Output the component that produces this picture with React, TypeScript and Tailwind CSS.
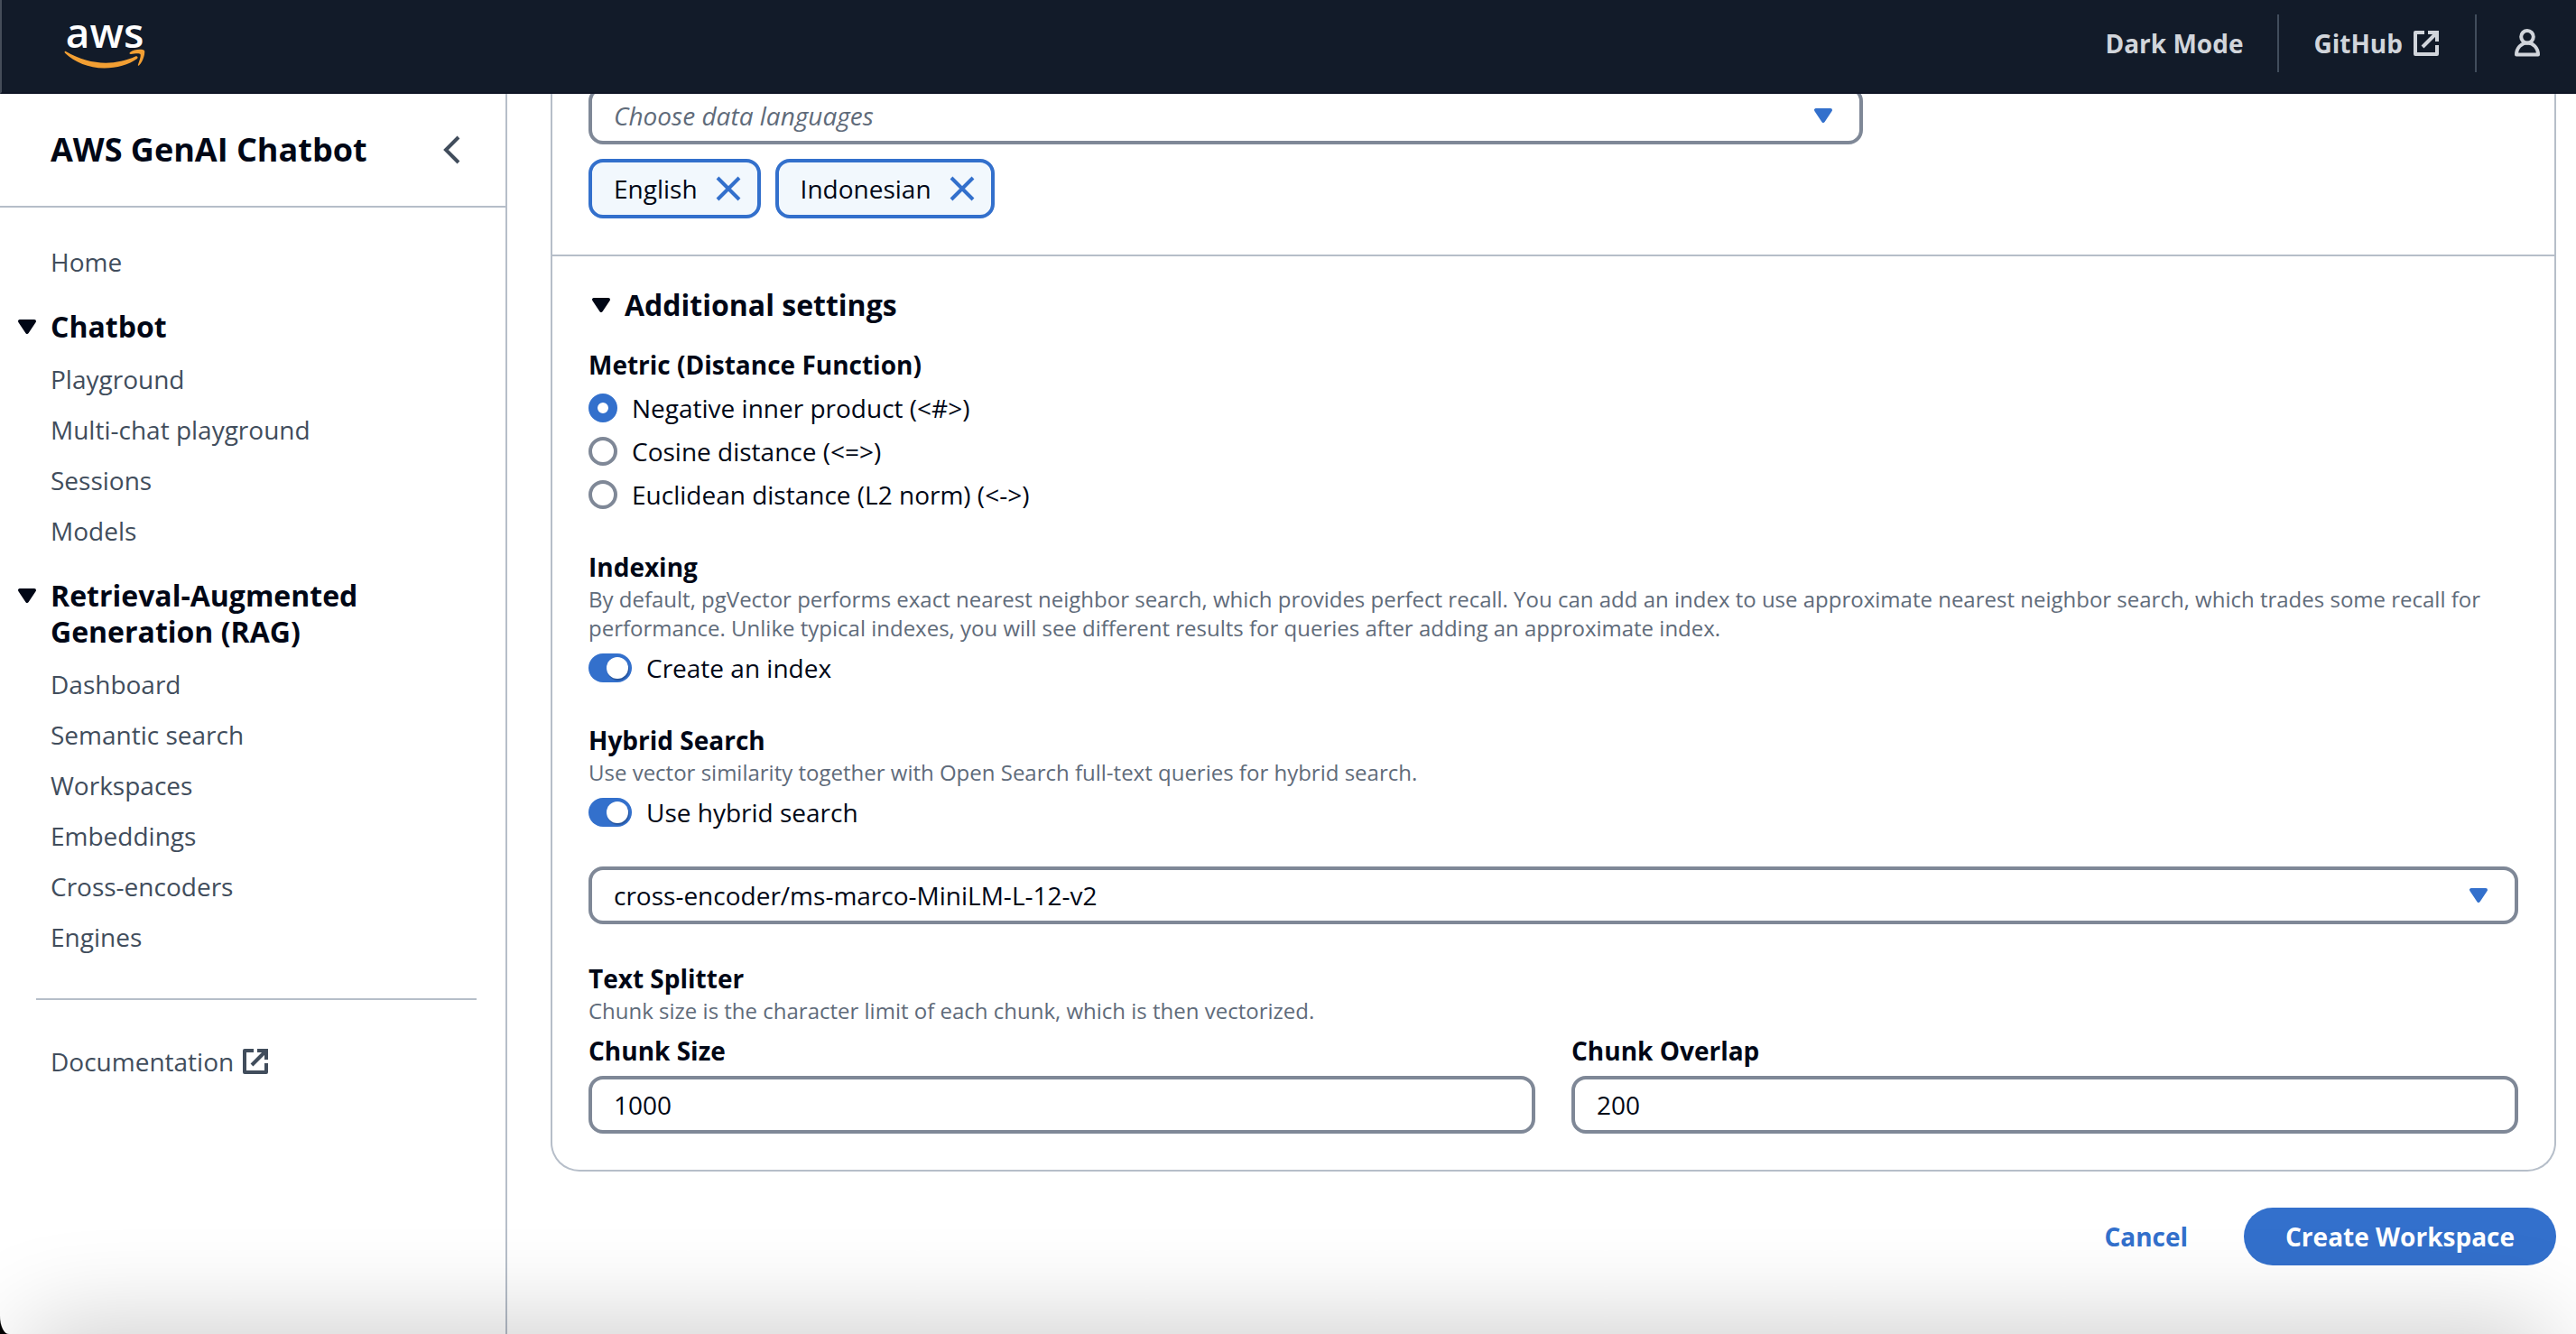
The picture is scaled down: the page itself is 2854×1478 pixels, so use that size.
import React, { useState } from "react";

function ExternalIcon({ className }: { className?: string }) {
  return (
    <svg viewBox="0 0 16 16" aria-hidden="true" className={className} fill="none" stroke="currentColor" strokeWidth="2" strokeLinejoin="round">
      <path d="M7 2H2v12h12V9" />
      <path d="M9 2h5v5" strokeLinejoin="miter" />
      <path d="M6 10l7.5-7.5" />
    </svg>
  );
}

function UserIcon() {
  return (
    <svg viewBox="0 0 16 16" aria-hidden="true" className="size-8" fill="none" stroke="currentColor" strokeWidth="2" strokeLinejoin="round">
      <circle cx="8" cy="4.400" r="3.400" />
      <path d="M8 7.800c-3.300 0-6 2.700-6 6.500h12c0-3.800-2.700-6.500-6-6.500z" />
    </svg>
  );
}

function Caret() {
  return (
    <svg viewBox="0 0 16 16" aria-hidden="true" className="size-8 shrink-0" fill="currentColor" stroke="currentColor" strokeWidth="2" strokeLinejoin="round">
      <path d="M4 5h8l-4 6-4-6z" />
    </svg>
  );
}

function AwsLogo() {
  return (
    <a href="#" aria-label="aws" className="flex h-16 w-24 flex-col items-center text-white">
      <span className="text-[46px] leading-[38px] font-semibold">aws</span>
      <svg viewBox="0 0 90 23" aria-hidden="true" className="h-[23px] w-[90px] shrink-0" fill="#f29f33">
        <path d="M2 3C28 18.500 56 19 79 8.500C81 7.500 82.500 9.500 81 11C72 17.500 58 21.500 44.500 21.500C27 21.500 12 15 1 4.800C0 3.500 1 2.500 2 3z" />
        <path d="M73 4c4-3.500 14-4 16-2 1 2-1 12-6 16.500-1 .5-1.500 0-1-1 1-3 3.500-9.500 2.500-11.500-1-1.500-7-.5-10.500 0-1.500 0-2-1-1-2z" />
      </svg>
    </a>
  );
}

function NavLink({ children }: { children: React.ReactNode }) {
  return (
    <li>
      <a href="#" className="flex items-center gap-2 text-[#414d5c]">{children}</a>
    </li>
  );
}

function NavSection({ title, items }: { title: string; items: string[] }) {
  return (
    <section>
      <button type="button" aria-expanded="true" className="-ml-[42px] flex items-start gap-2.5 pb-4.5 text-left text-[32px] leading-10 font-bold">
        <span className="flex h-10 items-center"><Caret /></span>
        <span>{title}</span>
      </button>
      <ul className="flex flex-col gap-4">
        {items.map((i) => <NavLink key={i}>{i}</NavLink>)}
      </ul>
    </section>
  );
}

function Select({ id, label, options, placeholder }: { id: string; label: string; options: string[]; placeholder?: boolean }) {
  return (
    <div className="relative flex items-center">
      <select
        id={id}
        aria-label={label}
        className={
          placeholder
            ? "h-16 w-full appearance-none rounded-2xl border-4 border-[#7f8897] bg-white px-6 text-[#5f6b7a] italic"
            : "h-16 w-full appearance-none rounded-2xl border-4 border-[#7f8897] bg-white px-6"
        }
      >
        {options.map((o) => <option key={o}>{o}</option>)}
      </select>
      <span className="pointer-events-none absolute right-7 text-[#3370cc]"><Caret /></span>
    </div>
  );
}

function Token({ label, onRemove }: { label: string; onRemove: () => void }) {
  return (
    <li className="flex h-[66px] items-center gap-4.5 rounded-2xl border-4 border-[#3370cc] bg-[#f2f8fd] pr-4 pl-6">
      {label}
      <button type="button" aria-label={`Remove ${label}`} onClick={onRemove} className="text-[#3370cc]">
        <svg viewBox="0 0 16 16" aria-hidden="true" className="size-8" fill="none" stroke="currentColor" strokeWidth="2">
          <path d="M2 2l12 12M14 2L2 14" />
        </svg>
      </button>
    </li>
  );
}

function Field({ title, hint, children }: { title: string; hint: string; children: React.ReactNode }) {
  return (
    <div>
      <h3 className="font-bold">{title}</h3>
      <p className="pb-2 text-2xl leading-8 text-[#5f6b7a]">{hint}</p>
      {children}
    </div>
  );
}

function Toggle({ label }: { label: string }) {
  return (
    <label className="flex items-center gap-4">
      <input
        type="checkbox"
        role="switch"
        defaultChecked
        className="flex h-8 w-12 appearance-none items-center rounded-full bg-[#7f8897] p-1 before:size-6 before:rounded-full before:bg-white before:shadow-[1px_2px_1px_rgba(0,7,22,0.25)] checked:justify-end checked:bg-[#3370cc]"
      />
      {label}
    </label>
  );
}

function NumberInput({ id, label, value }: { id: string; label: string; value: string }) {
  return (
    <div className="flex flex-col gap-2">
      <label htmlFor={id} className="font-bold">{label}</label>
      <input id={id} type="text" inputMode="numeric" defaultValue={value} className="h-16 w-full rounded-2xl border-4 border-[#7f8897] bg-white px-6" />
    </div>
  );
}

const metrics = ["Negative inner product (<#>)", "Cosine distance (<=>)", "Euclidean distance (L2 norm) (<->)"];

export default function App() {
  const [languages, setLanguages] = useState(["English", "Indonesian"]);

  return (
    <div className="relative flex h-screen flex-col overflow-hidden bg-white font-['Open_Sans',sans-serif] text-[28px] leading-10 text-[#000716] shadow-[0_0_0_40px_#000] [border-bottom-left-radius:10px_20px]">
      <header className="relative z-10 flex h-[104px] shrink-0 items-center justify-between border-b-2 border-l-2 border-b-[#0f1525] border-l-[#454d59] bg-[#121b29] pr-[38px] pb-1.5 pl-[66px] font-bold text-[#d1d5db]">
        <AwsLogo />
        <nav aria-label="Utilities" className="flex items-center">
          <button type="button" className="px-[38px]">Dark Mode</button>
          <div className="flex h-16 items-center border-x-2 border-[#414d5c] px-[38px]">
            <a href="#" className="flex items-center gap-2.5">GitHub <ExternalIcon className="size-8" /></a>
          </div>
          <button type="button" aria-label="User" className="pl-10"><UserIcon /></button>
        </nav>
      </header>

      <div className="flex min-h-0 flex-1">
        <aside className="w-[562px] shrink-0 border-r-2 border-[#b6bec9]">
          <div className="flex h-[126px] items-center justify-between border-b-2 border-[#b6bec9] pr-11 pl-14">
            <h2 className="text-4xl leading-11 font-bold">AWS GenAI Chatbot</h2>
            <button type="button" aria-label="Close navigation" className="text-[#414d5c]">
              <svg viewBox="0 0 16 16" aria-hidden="true" className="size-8" fill="none" stroke="currentColor" strokeWidth="2">
                <path d="M12 1L5 8l7 7" />
              </svg>
            </button>
          </div>
          <nav aria-label="Main" className="flex flex-col gap-8 px-14 pt-10">
            <ul><NavLink>Home</NavLink></ul>
            <NavSection title="Chatbot" items={["Playground", "Multi-chat playground", "Sessions", "Models"]} />
            <NavSection
              title="Retrieval-Augmented Generation (RAG)"
              items={["Dashboard", "Semantic search", "Workspaces", "Embeddings", "Cross-encoders", "Engines"]}
            />
          </nav>
          <hr className="my-12 mr-8 ml-10 border-t-2 border-[#b6bec9]" />
          <ul className="px-14">
            <NavLink>Documentation <ExternalIcon className="size-8" /></NavLink>
          </ul>
        </aside>

        <main className="flex min-w-0 flex-1 flex-col pr-[22px] pl-12">
          <form onSubmit={(e) => e.preventDefault()}>
            <div className="-mt-2 rounded-b-[32px] border-2 border-t-0 border-[#b6bec9]">
              <div className="border-b-2 border-[#b6bec9] px-10 pb-10">
                <div className="grid grid-cols-12 gap-10">
                  <div className="col-span-8">
                    <Select id="languages" label="Data languages" options={["Choose data languages"]} placeholder />
                  </div>
                </div>
                <ul className="flex gap-4 pt-4">
                  {languages.map((l) => (
                    <Token key={l} label={l} onRemove={() => setLanguages(languages.filter((x) => x !== l))} />
                  ))}
                </ul>
              </div>

              <div className="px-10 pt-8.5 pb-10">
                <button type="button" aria-expanded="true" className="-ml-0.5 flex items-center gap-2.5 text-[32px] leading-10 font-bold">
                  <Caret />
                  Additional settings
                </button>
                <div className="flex flex-col gap-10 pt-6.5">
                  <fieldset>
                    <legend className="font-bold">Metric (Distance Function)</legend>
                    <div className="flex flex-col gap-2 pt-2">
                      {metrics.map((m, i) => (
                        <label key={m} className="flex items-center gap-4">
                          <input
                            type="radio"
                            name="metric"
                            defaultChecked={i === 0}
                            className="size-8 appearance-none rounded-full border-4 border-[#7f8897] bg-white checked:border-10 checked:border-[#3370cc]"
                          />
                          {m}
                        </label>
                      ))}
                    </div>
                  </fieldset>

                  <Field
                    title="Indexing"
                    hint="By default, pgVector performs exact nearest neighbor search, which provides perfect recall. You can add an index to use approximate nearest neighbor search, which trades some recall for performance. Unlike typical indexes, you will see different results for queries after adding an approximate index."
                  >
                    <Toggle label="Create an index" />
                  </Field>

                  <Field title="Hybrid Search" hint="Use vector similarity together with Open Search full-text queries for hybrid search.">
                    <Toggle label="Use hybrid search" />
                  </Field>

                  <Select id="cross-encoder" label="Cross-encoder model" options={["cross-encoder/ms-marco-MiniLM-L-12-v2"]} />

                  <Field title="Text Splitter" hint="Chunk size is the character limit of each chunk, which is then vectorized.">
                    <div className="grid grid-cols-2 gap-10">
                      <NumberInput id="chunk-size" label="Chunk Size" value="1000" />
                      <NumberInput id="chunk-overlap" label="Chunk Overlap" value="200" />
                    </div>
                  </Field>
                </div>
              </div>
            </div>

            <div className="flex justify-end gap-4 pt-10 font-bold">
              <button type="button" className="h-16 px-[46px] text-[#3370cc]">Cancel</button>
              <button type="submit" className="h-16 rounded-full bg-[#3370cc] px-[46px] text-white">Create Workspace</button>
            </div>
          </form>
        </main>
      </div>

      <div aria-hidden="true" className="pointer-events-none absolute inset-x-10 top-full h-40 shadow-[0_0_110px_10px_rgba(0,0,0,0.2)]" />
    </div>
  );
}
